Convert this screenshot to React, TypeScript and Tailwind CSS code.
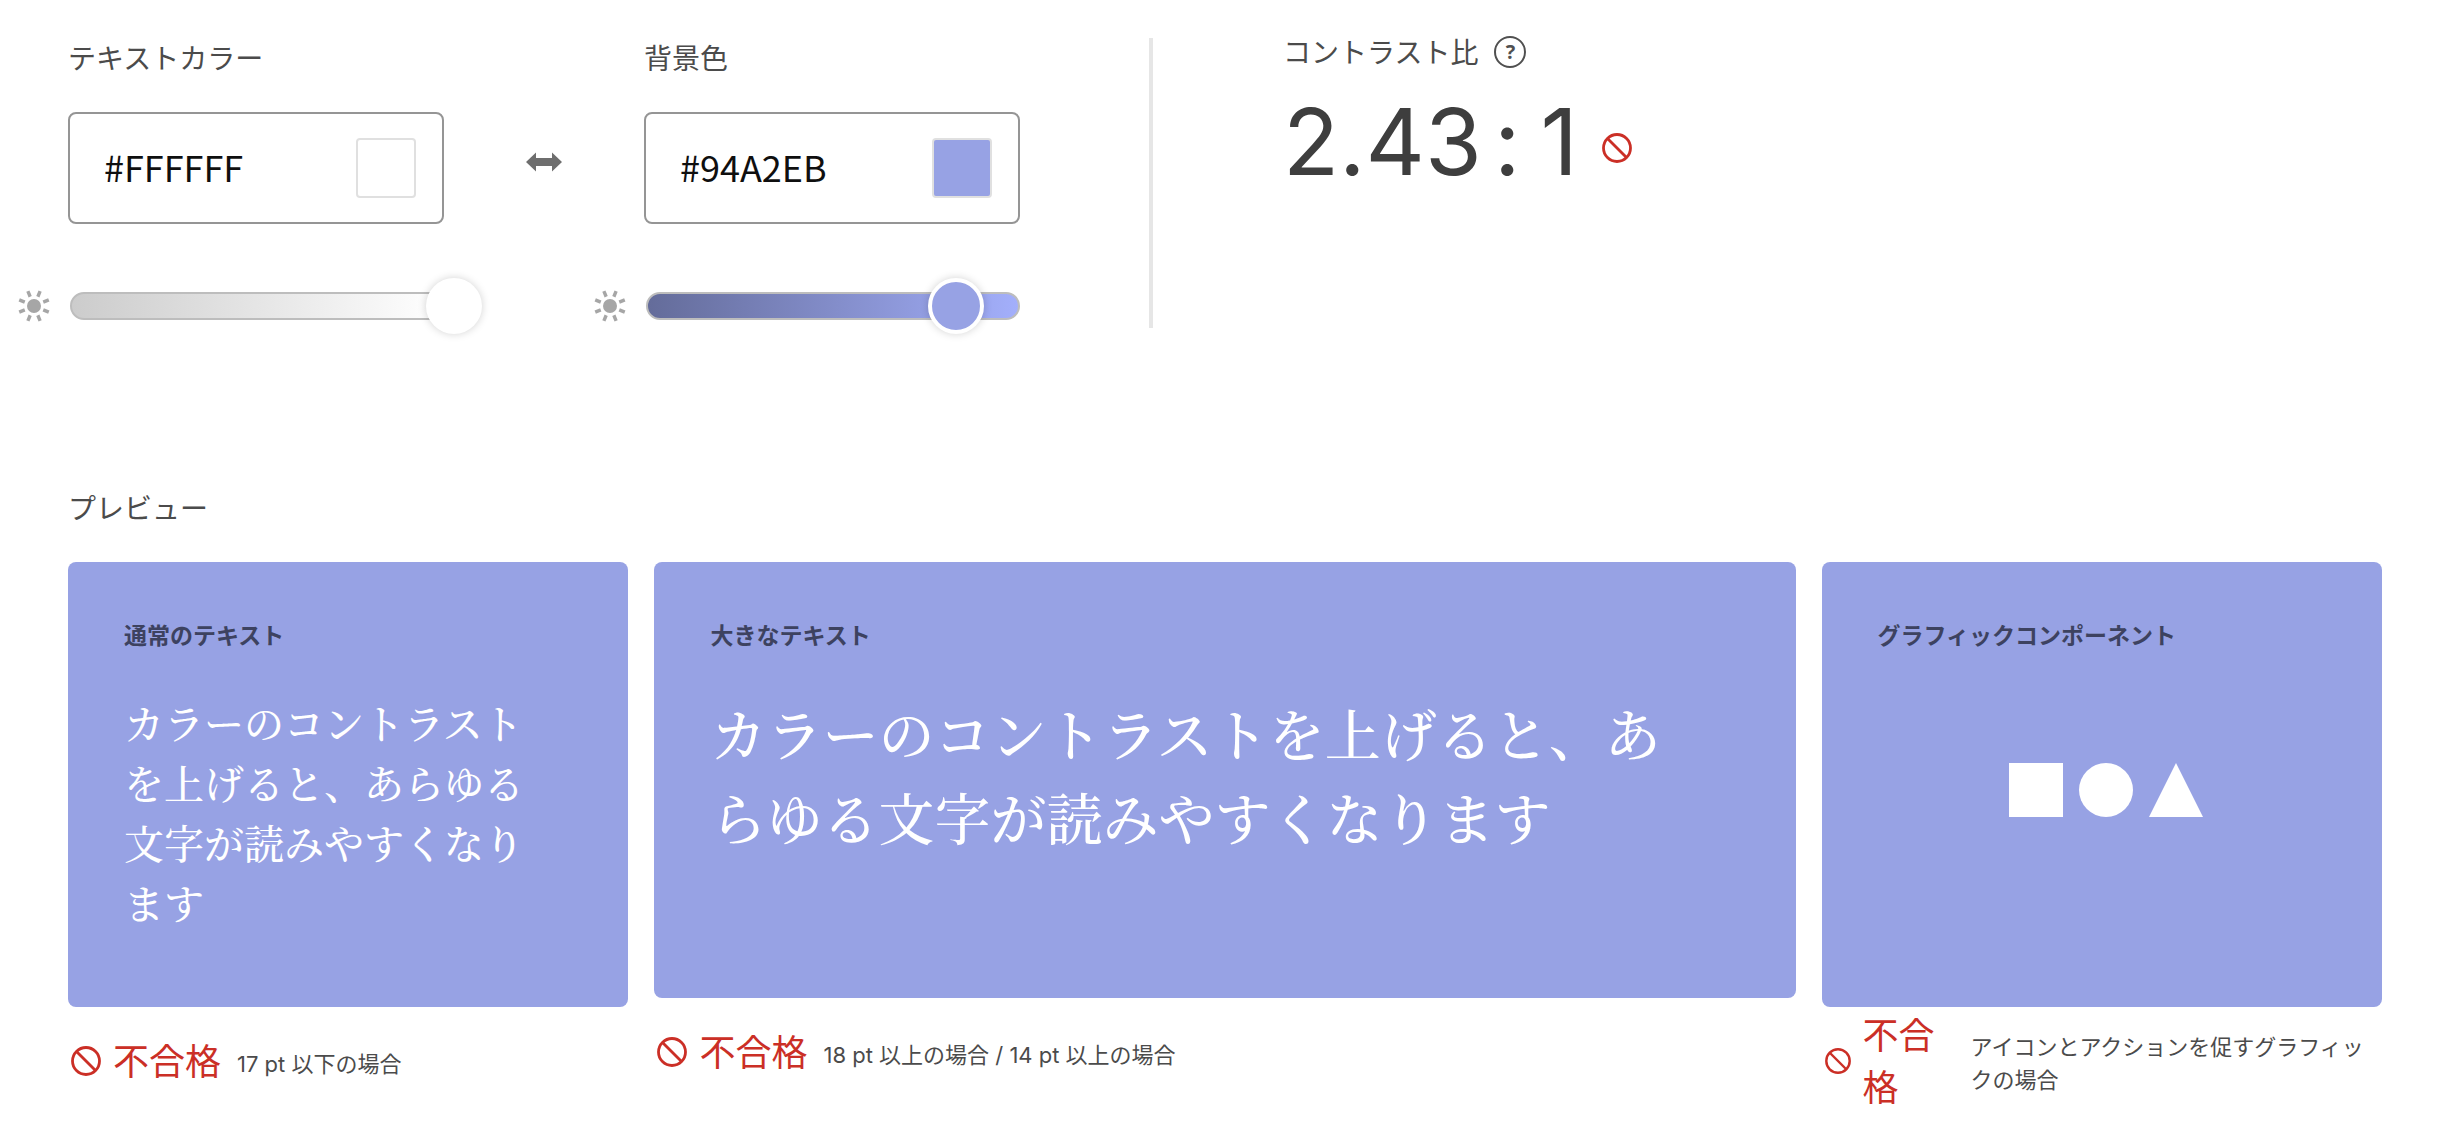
import { useState, type ReactNode } from "react";

const RAY_ANGLES = [22.5, 67.5, 112.5, 157.5, 202.5, 247.5, 292.5, 337.5];

function SunIcon() {
  return (
    <svg viewBox="-16 -16 32 32" className="size-8 text-[#a6a6a6]" aria-hidden="true">
      <circle r="7" fill="currentColor" />
      {RAY_ANGLES.map((angle) => (
        <path key={angle} d="M0 -10V-16" stroke="currentColor" strokeWidth="3.4" transform={`rotate(${angle})`} />
      ))}
    </svg>
  );
}

function BanIcon({ className }: { className: string }) {
  return (
    <svg viewBox="0 0 30 30" className={className} fill="none" stroke="#cb2f26" strokeWidth="2.8" aria-hidden="true">
      <circle cx="15" cy="15" r="13.5" />
      <path d="M5.5 5.5L24.5 24.5" />
    </svg>
  );
}

function SwapIcon() {
  return (
    <svg viewBox="0 0 36 20" className="h-5 w-9" fill="#6e6e6e" aria-hidden="true">
      <path d="M0 10L10 .5V6H26V.5L36 10L26 19.5V14H10V19.5Z" />
    </svg>
  );
}

type PickerProps = {
  id: string;
  label: string;
  hex: string;
  swatch: string;
  track: string;
  thumb: string;
  level: number;
};

function ColorPicker({ id, label, hex, swatch, track, thumb, level }: PickerProps) {
  const [value, setValue] = useState(hex);
  const [brightness, setBrightness] = useState(level);
  return (
    <div className="grid grid-cols-[50px_376px]">
      <label htmlFor={id} className="col-start-2 text-[28px] leading-[42px] text-[#4b4b4b]">
        {label}
      </label>
      <div className="col-start-2 mt-[34px] flex h-28 items-center rounded-lg border-2 border-[#959595] bg-white pr-[26px] pl-[34px]">
        <input
          id={id}
          type="text"
          value={value}
          onChange={(e) => setValue(e.target.value)}
          className="min-w-0 flex-1 bg-transparent pb-1 text-4xl text-[#0f0f0f] outline-none"
        />
        <button
          type="button"
          aria-label={`${label}を選択`}
          className={`size-[60px] rounded border-2 border-[#e0e0e0] ${swatch}`}
        />
      </div>
      <div className="mt-[54px] flex items-center">
        <SunIcon />
      </div>
      <div className="relative mt-[54px] ml-0.5 flex h-14 items-center">
        <div className={`h-7 w-full rounded-full border-2 border-[#bdbdbd] bg-linear-to-r ${track}`} />
        <input
          type="range"
          min={0}
          max={100}
          step={0.1}
          value={brightness}
          onChange={(e) => setBrightness(Number(e.target.value))}
          aria-label={`${label}の明るさ`}
          className={`absolute top-0 left-0 h-14 w-[412px] cursor-pointer appearance-none bg-transparent [&::-webkit-slider-thumb]:size-14 [&::-webkit-slider-thumb]:appearance-none [&::-webkit-slider-thumb]:rounded-full [&::-webkit-slider-thumb]:border-4 [&::-webkit-slider-thumb]:border-white [&::-webkit-slider-thumb]:shadow-[0_0_8px_rgba(0,0,0,0.18)] ${thumb}`}
        />
      </div>
    </div>
  );
}

function PreviewCard({ title, height, children }: { title: string; height: string; children: ReactNode }) {
  return (
    <div className={`flex flex-col rounded-lg bg-[#97a2e4] px-14 pt-14 pb-14 ${height}`}>
      <h3 className="text-[23px] leading-8 font-bold text-[#3d4260]">{title}</h3>
      {children}
    </div>
  );
}

function Verdict({ note, wrap = false }: { note: string; wrap?: boolean }) {
  return (
    <div className="flex min-h-[108px] items-center pl-[3px]">
      <BanIcon className={wrap ? "size-[26px] shrink-0" : "size-[30px] shrink-0"} />
      <strong
        className={`ml-3 shrink-0 pb-1 text-4xl leading-[52px] font-normal text-[#cb2f26] ${wrap ? "w-[92px]" : ""}`}
      >
        不合格
      </strong>
      <span className="ml-4 pt-1.5 font-[Inter,'Noto_Sans_CJK_JP',sans-serif] text-[22px] leading-[33px] text-[#4b4b4b]">
        {note}
      </span>
    </div>
  );
}

const SAMPLE = "カラーのコントラストを上げると、あらゆる文字が読みやすくなります";

export default function App() {
  return (
    <main lang="ja" className="bg-white font-['Noto_Sans_CJK_JP',sans-serif]">
      <section className="flex items-start pt-9 pl-[18px]">
        <ColorPicker
          id="text-color"
          label="テキストカラー"
          hex="#FFFFFF"
          swatch="bg-white"
          track="from-[#cccccc] to-white"
          thumb="[&::-webkit-slider-thumb]:bg-white"
          level={100}
        />
        <div className="mt-[106px] flex w-[150px] justify-end pr-8">
          <button type="button" aria-label="色を入れ替え" className="py-[10px]">
            <SwapIcon />
          </button>
        </div>
        <ColorPicker
          id="background-color"
          label="背景色"
          hex="#94A2EB"
          swatch="bg-[#97a2e4]"
          track="from-[#646c9a] to-[#a3affb]"
          thumb="[&::-webkit-slider-thumb]:bg-[#97a2e4]"
          level={79.2}
        />
        <div className="mt-0.5 ml-[129px] h-[290px] w-1 bg-[#e6e6e6]" />
        <div className="ml-[130px]">
          <div className="flex h-8 items-center gap-4">
            <h2 className="pb-0.5 text-[28px] leading-8 text-[#4b4b4b]">コントラスト比</h2>
            <button
              type="button"
              aria-label="ヘルプ"
              className="flex size-8 items-center justify-center rounded-full border-2 border-[#505050] font-['Open_Sans',sans-serif] text-xl leading-none font-bold text-[#505050]"
            >
              ?
            </button>
          </div>
          <div className="mt-[18px] flex items-center gap-6">
            <output className="flex gap-3 font-[Inter,sans-serif] text-[92px] leading-28 text-[#3e3e3e]">
              <span>2.43</span>
              <span>:</span>
              <span className="pl-2">1</span>
            </output>
            <BanIcon className="mt-3 size-[30px]" />
          </div>
        </div>
      </section>

      <section className="mt-[153px] pr-[55px] pl-[68px]">
        <h2 className="text-[28px] leading-10 text-[#4b4b4b]">プレビュー</h2>
        <div className="mt-[35px] grid grid-cols-[28fr_57fr_28fr] items-start gap-[26px]">
          <article>
            <PreviewCard title="通常のテキスト" height="min-h-[445px]">
              <p className="mt-[42px] pr-6 font-['Noto_Serif_CJK_JP','Noto_Serif_JP','Noto_Sans_CJK_JP',serif] text-[40px] leading-[60px] font-medium text-white">
                {SAMPLE}
              </p>
            </PreviewCard>
            <Verdict note="17 pt 以下の場合" />
          </article>
          <article>
            <PreviewCard title="大きなテキスト" height="min-h-[436px]">
              <p className="mt-10 pr-6 font-['Noto_Serif_CJK_JP','Noto_Serif_JP','Noto_Sans_CJK_JP',serif] text-[56px] leading-[84px] font-medium text-white">
                {SAMPLE}
              </p>
            </PreviewCard>
            <Verdict note="18 pt 以上の場合 / 14 pt 以上の場合" />
          </article>
          <article>
            <PreviewCard title="グラフィックコンポーネント" height="min-h-[445px]">
              <div className="mt-[113px] flex justify-center gap-4 pl-2">
                <div className="size-[54px] bg-white" />
                <div className="size-[54px] rounded-full bg-white" />
                <svg viewBox="0 0 54 54" className="size-[54px]" fill="white" aria-hidden="true">
                  <path d="M27 0L54 54H0Z" />
                </svg>
              </div>
            </PreviewCard>
            <Verdict wrap note="アイコンとアクションを促すグラフィックの場合" />
          </article>
        </div>
      </section>
    </main>
  );
}
